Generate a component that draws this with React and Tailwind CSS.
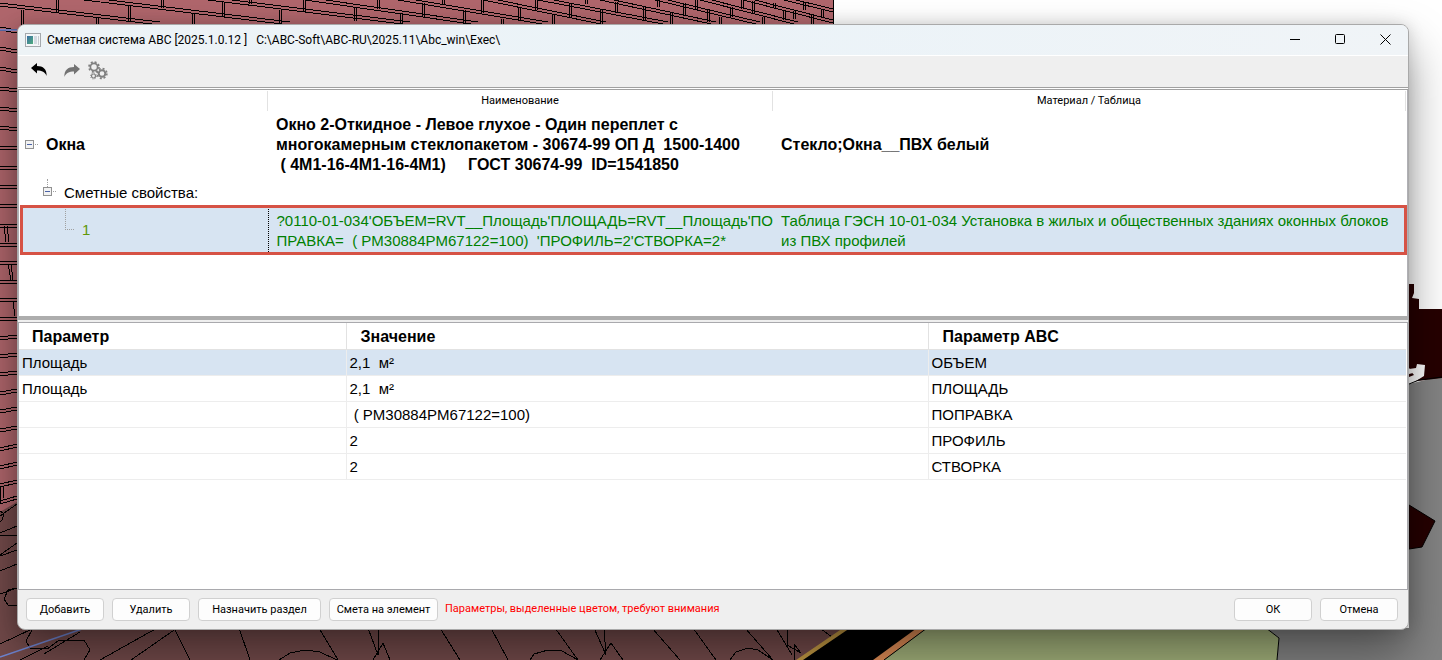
const nodes = {
  window: "Окна",
  name: [
    "Окно 2-Откидное - Левое глухое - Один переплет с",
    "многокамерным стеклопакетом - 30674-99 ОП Д  1500-1400",
    " ( 4М1-16-4М1-16-4М1)     ГОСТ 30674-99  ID=1541850",
  ],
  code: [
    "?0110-01-034'ОБЪЕМ=RVT__Площадь'ПЛОЩАДЬ=RVT__Площадь'ПО",
    "ПРАВКА=  ( PM30884PM67122=100)  'ПРОФИЛЬ=2'СТВОРКА=2*",
  ],
};

const params = [
  { name: "Площадь", value: "2,1  м²", abc: "ОБЪЕМ", selected: true },
  { name: "Площадь", value: "2,1  м²", abc: "ПЛОЩАДЬ" },
  { name: "", value: " ( PM30884PM67122=100)", abc: "ПОПРАВКА" },
  { name: "", value: "2", abc: "ПРОФИЛЬ" },
  { name: "", value: "2", abc: "СТВОРКА" },
];

// mortar joints: [x1, y1, x2, y2]
const courses = [
  [0, 6, 160, 25], [84, 0, 290, 25], [208, 0, 410, 25], [305, 0, 478, 25],
  [398, 0, 548, 25], [483, 0, 606, 25], [538, 0, 668, 25], [600, 0, 716, 25],
  [655, 0, 760, 25], [700, 0, 798, 25], [743, 0, 833, 23], [784, 0, 833, 12],
];
const joints = [
  [21, 10, 25], [56, 0, 13], [96, 18, 25], [128, 5, 21], [161, 0, 8], [192, 14, 25],
  [222, 2, 17], [249, 0, 4], [279, 10, 25], [303, 0, 12], [354, 7, 21], [377, 0, 9],
  [400, 13, 25], [422, 3, 17], [442, 0, 4], [463, 10, 25], [481, 0, 13], [501, 19, 25],
  [518, 7, 20], [535, 0, 10], [552, 14, 25], [569, 4, 17], [585, 0, 4], [600, 10, 24],
  [615, 2, 13], [643, 7, 20], [657, 0, 7], [670, 13, 25], [683, 3, 15], [695, 0, 10],
  [707, 10, 22], [719, 17, 25], [730, 7, 17], [741, 0, 9], [752, 1, 13], [762, 17, 25],
  [773, 3, 8], [783, 11, 20], [793, 11, 19], [803, 2, 10], [811, 15, 24], [821, 10, 18],
];
const wallRows = [
  27, 47, 67, 87, 107, 126, 146, 166, 185, 204, 224, 243, 262, 281, 299, 318,
  337, 355, 373, 392, 410, 429, 448, 466, 484, 501,
];
const floorLines = [
  "M157 628L100 660", "M177 628L131 660", "M174 628L190 660", "M239 628L250 660",
  "M319 628L338 660", "M279 660L290 653L305 650L320 652L337 660", "M368 628L378 655V628",
  "M373 660L383 643L390 660", "M440 628L460 660", "M491 628L508 660", "M555 628L578 660",
  "M530 660L534 654L548 650L562 651L578 660", "M594 628L606 655L604 628",
  "M600 660L611 643L623 660", "M652 628L680 660", "M693 628L716 660", "M745 628L773 660",
  "M730 660L736 652L748 648L758 650L773 660", "M776 628L792 655", "M787 628V645L801 653L794 644V660",
  "M820 628L832 637", "M0 644L32 629", "M44 654L80 632", "M20 660L48 646",
  "M32 630L26 641L30 648L47 649L58 641L84 640L90 650L84 660",
  "M0 516L17 504", "M0 533L17 526", "M0 535H17", "M0 555L17 543", "M0 556L17 550",
  "M0 571L17 564", "M0 594L17 588M17 588L8 590L4 599L8 605H17", "M0 511L4 514L2 520L0 522",
];

function ModelView() {
  return (
    <svg className="absolute inset-0 h-full w-full" viewBox="0 0 1442 660" preserveAspectRatio="xMinYMin slice" aria-hidden="true">
      <rect width="833" height="520" fill="#b0666c" />
      <path d="M0 512L17 502L860 502V660H0Z" fill="#744b4b" />
      <g stroke="#000" strokeWidth="1" fill="none" shapeRendering="crispEdges">
        {courses.map(([x1, y1, x2, y2]) => (
          <path key={x1} d={`M${x1} ${y1}L${x2} ${y2}M${x1} ${y1 - 3}L${x2} ${y2 - 3}`} />
        ))}
        {joints.map(([x, y1, y2]) => (
          <path key={x} d={`M${x} ${y1}V${y2}M${x + 2} ${y1}V${y2}`} />
        ))}
        {wallRows.map((y) => {
          const tilt = Math.round((230 - y) / 60);
          return <path key={y} d={`M0 ${y}L17 ${y + tilt}M0 ${y + 3}L17 ${y + 3 + tilt}`} />;
        })}
        <path d="M4 226L6 242M7 226L9 242M8 264L11 280M11 264L13 280M13 302L15 316M0 486V503M3 486V498" />
        {floorLines.map((d) => <path key={d} d={d} />)}
        <path d="M833 0V25" />
      </g>
      <path d="M0 657L82 629M0 30H17" stroke="#7289d8" strokeWidth="1.5" fill="none" />
      <path d="M848 628L797 660H890L930 628Z" fill="#000" />
      <path d="M843 628L796 660H803L850 628Z" fill="#c49a44" />
      <path d="M917 628L873 660H884L927 628Z" fill="#e08d56" />
      <path d="M927 628L884 660H1277L1279 638L1266 628Z" fill="#a3b27b" />
      <path d="M1266 628L1279 638L1277 660H1442V376L1409 384V628Z" fill="#848484" />
      <path d="M1266 628L1279 638L1277 660M927 628L884 660" stroke="#000" fill="none" />
      <path d="M1409 284H1414V293L1412 298L1419 299V309H1442V378L1409 382V374L1413 373L1409 368Z" fill="#260000" />
      <path d="M1409 369L1416 368L1417 364L1425 365L1424 376L1416 381L1409 384V377L1414 375Z" fill="#ffffff" />
      <path d="M1409 505L1435 521L1422 547L1409 549Z" fill="#260000" stroke="#000" />
      <path d="M1409 384L1419 380L1442 377" stroke="#000" fill="none" />
    </svg>
  );
}

function AppIcon() {
  return (
    <svg className="h-[14px] w-4" viewBox="0 0 16 14" aria-hidden="true">
      <defs>
        <linearGradient id="pane" x1="0" y1="0" x2="1" y2="1">
          <stop offset="0" stopColor="#3a6ea5" />
          <stop offset="1" stopColor="#4fae7c" />
        </linearGradient>
      </defs>
      <rect x=".5" y=".5" width="15" height="13" fill="#f4f6f8" stroke="#a4a9ad" />
      <rect x="2" y="3" width="6" height="8" fill="url(#pane)" />
      <rect x="9" y="3" width="3" height="8" fill="#d3dbe2" />
      <rect x="13" y="3" width="1" height="9" fill="#c5cbd0" />
    </svg>
  );
}

function ArrowIcon({ className }) {
  return (
    <svg className={className} width="16" height="14" viewBox="0 0 16 14" fill="currentColor" aria-hidden="true">
      <path d="M0 5L6 0V3C12 3 16 6 15.600 13C14 9 11 7.500 6 7.500V10.500Z" />
    </svg>
  );
}

function GearsIcon() {
  return (
    <svg width="20" height="19" viewBox="0 0 20 19" fill="none" stroke="#808080" aria-hidden="true">
      <circle cx="6" cy="6" r="3.600" strokeWidth="1.700" />
      <circle cx="6" cy="6" r="5" strokeWidth="1.700" strokeDasharray="2 1.930" />
      <circle cx="14" cy="12.500" r="3.300" strokeWidth="2" />
      <circle cx="14" cy="12.500" r="4.900" strokeWidth="1.600" strokeDasharray="2 1.850" />
      <circle cx="5.500" cy="15" r="2" strokeWidth="1.200" />
      <circle cx="5.500" cy="15" r="3" strokeWidth="1" strokeDasharray="1 1.360" />
    </svg>
  );
}

function Toggle({ label }) {
  return (
    <button type="button" aria-label={label} className="flex shrink-0 items-center pb-[2px]">
      <svg width="13" height="9" viewBox="0 0 13 9" aria-hidden="true" shapeRendering="crispEdges">
        <rect x=".5" y=".5" width="8" height="8" rx="1" fill="#f2f2f2" stroke="#919191" />
        <path d="M2 4.500H7" stroke="#4b63a7" />
        <path d="M10 4.500H13" stroke="#a0a0a0" strokeDasharray="1 1" />
      </svg>
    </button>
  );
}

function PushButton({ className, children }) {
  return (
    <button type="button" className={`h-[23px] rounded border border-[#d0d0d0] bg-[#fdfdfd] pt-px text-[11px] leading-4 ${className}`}>
      {children}
    </button>
  );
}

export default function App() {
  return (
    <div className="relative flex h-screen flex-col overflow-hidden bg-white pt-6 pr-[33px] pb-[30px] pl-[17px] font-[Roboto,sans-serif] text-black">
      <ModelView />

      <div className="relative flex min-h-0 flex-1 flex-col overflow-hidden rounded-lg border border-[#a9a9a9] bg-[#efefef] [box-shadow:0_24px_48px_rgba(0,0,0,0.4),0_0_16px_rgba(0,0,0,0.15)]">
        <header className="flex h-[31px] shrink-0 items-center border-b border-white bg-linear-to-r from-[#edf3f6] via-[#ebf3f8] to-[#f0f4f7] pl-[7px]">
          <AppIcon />
          <h1 className="ml-[6px] text-[12px] leading-4 whitespace-pre">{"Сметная система ABC [2025.1.0.12 ]   C:\\ABC-Soft\\ABC-RU\\2025.11\\Abc_win\\Exec\\"}</h1>
          <div className="ml-auto flex pb-px">
            <button type="button" aria-label="Свернуть" className="flex h-7 w-[45px] items-center justify-center">
              <svg width="11" height="11" viewBox="0 0 11 11" stroke="#000"><path d="M0 5.500H10" /></svg>
            </button>
            <button type="button" aria-label="Развернуть" className="flex h-7 w-[45px] items-center justify-center">
              <svg width="11" height="11" viewBox="0 0 11 11" fill="none" stroke="#000"><rect x=".5" y=".5" width="9" height="9" rx="1" /></svg>
            </button>
            <button type="button" aria-label="Закрыть" className="flex h-7 w-[45px] items-center justify-center">
              <svg width="11" height="11" viewBox="0 0 11 11" stroke="#000"><path d="M.5 .5L10.500 10.500M10.500 .5L.5 10.500" /></svg>
            </button>
          </div>
        </header>

        <div className="flex h-[31px] shrink-0 items-center pb-[2px] pl-[13px]">
          <button type="button" aria-label="Отменить"><ArrowIcon className="mb-[2px] text-black" /></button>
          <button type="button" aria-label="Повторить" className="ml-[17px]"><ArrowIcon className="-scale-x-100 text-[#737373]" /></button>
          <button type="button" aria-label="Настройки" className="ml-2"><GearsIcon /></button>
        </div>

        <div className="h-[3px] shrink-0 border-y border-[#a0a0a0] bg-white" />

        <section className="h-[230px] shrink-0 border-x border-b-4 border-x-[#b0b0b5] border-b-[#adadad] bg-white pr-px pl-[2px]">
          <table className="w-full table-fixed border-collapse text-left text-[15px] leading-5">
            <colgroup>
              <col className="w-[247px]" />
              <col className="w-[505px]" />
              <col />
            </colgroup>
            <thead>
              <tr className="h-[25px] align-top text-[11px] leading-5">
                <th className="p-0"><div className="mt-px h-5 border-r border-[#e2e2e2]" /></th>
                <th className="p-0 text-center font-normal"><div className="mt-px h-5 border-r border-[#e2e2e2]">Наименование</div></th>
                <th className="p-0 text-center font-normal"><div className="mt-px h-5 border-r border-[#e2e2e2]">Материал / Таблица</div></th>
              </tr>
            </thead>
            <tbody>
              <tr className="font-['Liberation_Sans',Arial,sans-serif] text-base leading-5 font-bold">
                <td className="py-0 pl-1">
                  <div className="flex items-center gap-2">
                    <Toggle label="Свернуть Окна" />
                    {nodes.window}
                  </div>
                </td>
                <td className="py-0 pl-2 whitespace-pre">
                  {nodes.name.map((line) => <div key={line}>{line}</div>)}
                </td>
                <td className="py-0 pl-2">Стекло;Окна__ПВХ белый</td>
              </tr>
              <tr className="h-[31px] font-['Liberation_Sans',Arial,sans-serif]">
                <td className="p-0 pt-1 pl-[22px]">
                  <div className="flex items-center gap-2">
                    <div className="relative flex">
                      <span className="absolute bottom-full left-1 h-2 border-l border-dotted border-[#a0a0a0]" />
                      <Toggle label="Свернуть Сметные свойства" />
                    </div>
                    Сметные свойства:
                  </div>
                </td>
                <td />
                <td />
              </tr>
              <tr className="h-12 bg-[#d7e4f2] font-['Liberation_Sans',Arial,sans-serif] text-[#008000] outline-3 -outline-offset-2 outline-[#d65245]">
                <td className="border-r border-dotted border-r-black p-0 pl-11">
                  <div className="flex h-12 items-center">
                    <span className="mb-6 h-6 w-[9px] border-b border-l border-dotted border-[#a0a0a0]" />
                    <span className="ml-2 text-[#5e9708]">1</span>
                  </div>
                </td>
                <td className="pt-[2px] pb-0 pl-2 whitespace-pre">
                  {nodes.code.map((line) => <div key={line}>{line}</div>)}
                </td>
                <td className="pt-[2px] pr-3 pb-0 pl-2">Таблица ГЭСН 10-01-034 Установка в жилых и общественных зданиях оконных блоков из ПВХ профилей</td>
              </tr>
            </tbody>
          </table>
        </section>

        <section className="mt-[2px] min-h-0 flex-1 border border-[#a9a9ad] bg-white pr-px">
          <table className="w-full table-fixed border-collapse text-left font-['Liberation_Sans',Arial,sans-serif] text-[15px] leading-5">
            <colgroup>
              <col className="w-[327px]" />
              <col className="w-[582px]" />
              <col />
            </colgroup>
            <thead>
              <tr className="h-[26px] border-b border-[#e2e2e2] text-base leading-5">
                <th className="border-r border-[#e2e2e2] pt-[2px] pb-0 pl-[13px]">Параметр</th>
                <th className="border-r border-[#e2e2e2] pt-[2px] pb-0 pl-[14px]">Значение</th>
                <th className="pt-[2px] pb-0 pl-[14px]">Параметр ABC</th>
              </tr>
            </thead>
            <tbody>
              {params.map((p) => (
                <tr key={p.abc} className={`h-[26px] border-b border-[#ededed] whitespace-pre ${p.selected ? "bg-[#d7e4f2]" : ""}`}>
                  <td className="border-r border-[#ededed] pt-[2px] pb-0 pl-[3px]">{p.name}</td>
                  <td className="border-r border-[#ededed] pt-[2px] pb-0 pl-[3px]">{p.value}</td>
                  <td className="pt-[2px] pb-0 pl-[3px]">{p.abc}</td>
                </tr>
              ))}
            </tbody>
          </table>
        </section>

        <footer className="flex h-[39px] shrink-0 items-center gap-2 pr-[10px] pb-px pl-2">
          <PushButton className="w-[78px]">Добавить</PushButton>
          <PushButton className="w-[78px]">Удалить</PushButton>
          <PushButton className="w-[123px]">Назначить раздел</PushButton>
          <PushButton className="w-[109px]">Смета на элемент</PushButton>
          <p className="-ml-px text-[11px] leading-4 text-[#ff0000]">Параметры, выделенные цветом, требуют внимания</p>
          <PushButton className="ml-auto w-[78px]">ОК</PushButton>
          <PushButton className="w-[78px]">Отмена</PushButton>
        </footer>
      </div>
    </div>
  );
}
